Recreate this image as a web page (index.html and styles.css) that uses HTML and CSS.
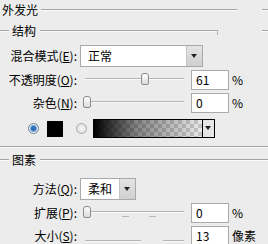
FILE: index.html
```html
<!DOCTYPE html>
<html lang="zh">
<head>
    <meta charset="UTF-8">
    <title>外发光</title>
    <link rel="stylesheet" href="styles.css">
</head>
<body>
    <div class="panel">
        <div class="title">
            <span class="caption">外发光</span>
            <i class="rule fill"></i>
            <i class="rule edge"></i>
        </div>

        <div class="legend">
            <i class="rule lead"></i>
            <span class="caption">结构</span>
            <i class="rule tail"></i>
            <i class="rule edge"></i>
        </div>

        <div class="row mode">
            <label>混合模式(<u>E</u>):</label>
            <div class="select wide"><span>正常</span><b class="arrow"></b></div>
        </div>

        <div class="row">
            <label>不透明度(<u>O</u>):</label>
            <div class="slider"><i class="thumb" style="left: 58px"></i></div>
            <div class="field">61</div>
            <span class="unit">%</span>
        </div>

        <div class="row">
            <label>杂色(<u>N</u>):</label>
            <div class="slider"><i class="thumb" style="left: 0px"></i></div>
            <div class="field">0</div>
            <span class="unit">%</span>
        </div>

        <div class="row colors">
            <i class="radio on"></i>
            <i class="swatch"></i>
            <i class="radio"></i>
            <div class="gradient"><b class="arrow small"></b></div>
        </div>

        <div class="rule full"></div>

        <div class="legend second">
            <i class="rule lead"></i>
            <span class="caption">图素</span>
            <i class="rule fill"></i>
        </div>

        <div class="row method">
            <label>方法(<u>Q</u>):</label>
            <div class="select short"><span>柔和</span><b class="arrow"></b></div>
        </div>

        <div class="row">
            <label>扩展(<u>P</u>):</label>
            <div class="slider"><i class="thumb" style="left: 0px"></i><i class="tick" style="left: 39px"></i><i class="tick" style="left: 66px"></i></div>
            <div class="field">0</div>
            <span class="unit">%</span>
        </div>

        <div class="row">
            <label>大小(<u>S</u>):</label>
            <div class="slider broken"><i class="gap"></i></div>
            <div class="field">13</div>
            <span class="unit">像素</span>
        </div>
    </div>
</body>
</html>
```

FILE: styles.css
```css
body {
    margin: 0;
    background: #ececec;
    font-family: "Noto Sans CJK SC", "DejaVu Sans", sans-serif;
    font-size: 12px;
    color: #000;
    width: 268px;
    height: 244px;
    overflow: hidden;
}

.panel {
    display: flex;
    flex-direction: column;
}

/* etched group lines */
.rule {
    display: block;
    height: 0;
    border-top: 1px solid #a4a4a4;
    border-bottom: 1px solid #fbfbfb;
}

.title,
.legend {
    display: flex;
    align-items: center;
    height: 20px;
    line-height: 1;
}

.title .caption {
    margin-left: 2px;
    margin-right: 3px;
}

.title .fill {
    flex: 1;
    margin-right: 25px;
}

.edge {
    width: 6px;
}

.legend {
    height: 22px;
}

.legend .lead {
    width: 9px;
    margin-right: 3px;
}

.legend .caption {
    margin-right: 4px;
}

.legend .tail {
    width: 177px;
    position: relative;
    margin-right: 45px;
}

.legend .tail::after {
    content: "";
    position: absolute;
    right: -1px;
    top: -1px;
    width: 1px;
    height: 5px;
    background: #b0b0b0;
}

.legend .fill {
    flex: 1;
}

.legend.second {
    margin-top: 5px;
    height: 14px;
}

.full {
    margin-top: 8px;
}

.row {
    display: flex;
    align-items: center;
    height: 20px;
    margin-top: 3px;
    line-height: 1;
}

.row label {
    width: 77px;
    text-align: right;
    margin-right: 3px;
    flex: none;
}

.row.mode {
    height: 22px;
    margin-top: 3px;
}

.row.method {
    height: 22px;
    margin-top: 11px;
}

.select {
    display: flex;
    height: 100%;
    box-sizing: border-box;
    border: 1px solid #a9a9a9;
    background: #fff;
}

.select span {
    flex: 1;
    padding-left: 7px;
    display: flex;
    align-items: center;
}

.select.wide {
    width: 123px;
}

.select.short {
    width: 56px;
}

.arrow {
    width: 15px;
    border-left: 1px solid #c4c4c4;
    background: linear-gradient(#e4e4e4, #cfcfcf);
    position: relative;
}

.arrow::after {
    content: "";
    position: absolute;
    left: 4px;
    top: 8px;
    border-left: 3px solid transparent;
    border-right: 3px solid transparent;
    border-top: 4px solid #222;
}

.slider {
    position: relative;
    width: 101px;
    height: 100%;
    margin-left: 3px;
    margin-right: 7px;
    flex: none;
}

.slider::before {
    content: "";
    position: absolute;
    left: 2px;
    right: 0;
    top: 8px;
    border-top: 1px solid #b4b4b4;
    border-bottom: 1px solid #fafafa;
}

.thumb {
    position: absolute;
    top: 3px;
    left: 0;
    width: 6px;
    height: 10px;
    border: 1px solid #8c8c8c;
    border-radius: 3px 3px 2px 2px;
    background: linear-gradient(#fdfdfd, #dcdcdc);
}

.tick {
    position: absolute;
    top: 13px;
    width: 7px;
    height: 1px;
    background: #b8b8b8;
}

.slider.broken::before {
    top: 14px;
}

.gap {
    position: absolute;
    left: 58px;
    top: 12px;
    width: 22px;
    height: 5px;
    background: #ececec;
}

.field {
    width: 38px;
    height: 100%;
    box-sizing: border-box;
    border: 1px solid #ababab;
    background: #fff;
    padding-left: 4px;
    display: flex;
    align-items: center;
    flex: none;
}

.unit {
    margin-left: 3px;
}

.colors {
    height: 19px;
    margin-top: 6px;
    padding-left: 28px;
}

.radio {
    width: 9px;
    height: 9px;
    border-radius: 50%;
    border: 1px solid #a8a8a8;
    background: radial-gradient(#fafafa, #d6d6d6);
    flex: none;
}

.radio.on {
    border-color: #6d7d92;
    background: radial-gradient(circle, #2f6fb8 0 2px, #7ca6d8 3px, #e6eef8 4px);
}

.swatch {
    width: 16px;
    height: 16px;
    background: #000;
    margin-left: 8px;
    margin-right: 13px;
    flex: none;
}

.gradient {
    width: 122px;
    height: 19px;
    margin-left: 6px;
    box-sizing: border-box;
    border: 1px solid #000;
    display: flex;
    justify-content: flex-end;
    background:
        linear-gradient(to right, #000, rgba(0, 0, 0, 0.45) 35%, rgba(0, 0, 0, 0) 92%),
        repeating-conic-gradient(#c9c9c9 0 25%, #eeeeee 0 50%) 0 0 / 8px 8px;
}

.arrow.small {
    width: 11px;
    border-left: 1px solid #000;
    background: #e6e6e6;
}

.arrow.small::after {
    left: 2px;
    top: 6px;
}
```
